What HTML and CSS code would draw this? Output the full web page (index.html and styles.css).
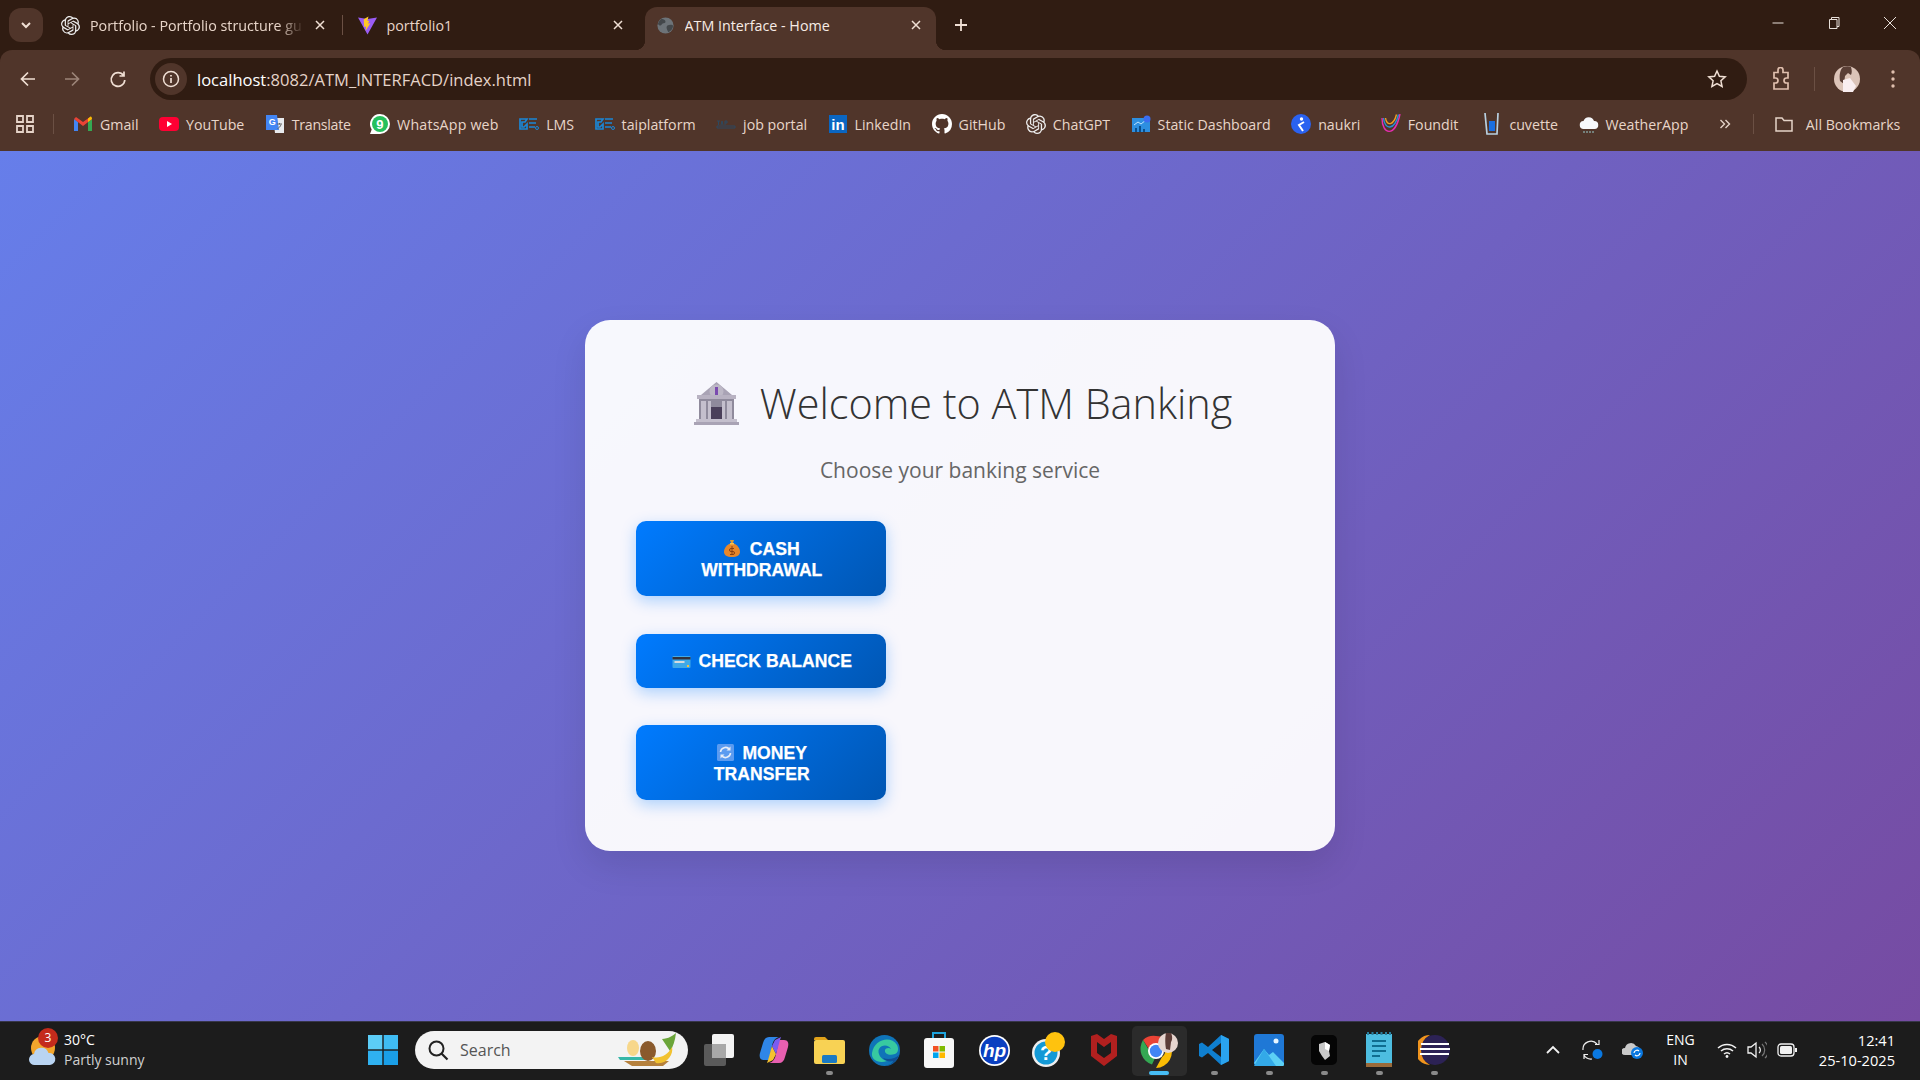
FILE: index.html
```html
<!DOCTYPE html>
<html lang="en">
<head>
<meta charset="utf-8">
<title>ATM Interface - Home</title>
<link rel="stylesheet" href="styles.css">
</head>
<body>
<header class="browser">
  <div class="tabstrip">
    <div class="tab-search"><svg width="14" height="14" viewBox="0 0 14 14"><path d="M3 5l4 4 4-4" fill="none" stroke="#f0dfd4" stroke-width="2"/></svg></div>
    <div class="tab tab-first">
      <svg class="tab-icon" viewBox="0 0 24 24" fill="#eee"><path d="M22.2819 9.8211a5.9847 5.9847 0 0 0-.5157-4.9108 6.0462 6.0462 0 0 0-6.5098-2.9A6.0651 6.0651 0 0 0 4.9807 4.1818a5.9847 5.9847 0 0 0-3.9977 2.9 6.0462 6.0462 0 0 0 .7427 7.0966 5.98 5.98 0 0 0 .511 4.9107 6.051 6.051 0 0 0 6.5146 2.9001A5.9847 5.9847 0 0 0 13.2599 24a6.0557 6.0557 0 0 0 5.7718-4.2058 5.9894 5.9894 0 0 0 3.9977-2.9001 6.0557 6.0557 0 0 0-.7475-7.0729zm-9.022 12.6081a4.4755 4.4755 0 0 1-2.8764-1.0408l.1419-.0804 4.7783-2.7582a.7948.7948 0 0 0 .3927-.6813v-6.7369l2.02 1.1686a.071.071 0 0 1 .038.052v5.5826a4.504 4.504 0 0 1-4.4945 4.4944zm-9.6607-4.1254a4.4708 4.4708 0 0 1-.5346-3.0137l.142.0852 4.783 2.7582a.7712.7712 0 0 0 .7806 0l5.8428-3.3685v2.3324a.0804.0804 0 0 1-.0332.0615L9.74 19.9502a4.4992 4.4992 0 0 1-6.1408-1.6464zM2.3408 7.8956a4.485 4.485 0 0 1 2.3655-1.9728V11.6a.7664.7664 0 0 0 .3879.6765l5.8144 3.3543-2.0201 1.1685a.0757.0757 0 0 1-.071 0l-4.8303-2.7865A4.504 4.504 0 0 1 2.3408 7.872zm16.5963 3.8558L13.1038 8.364 15.1192 7.2a.0757.0757 0 0 1 .071 0l4.8303 2.7913a4.4944 4.4944 0 0 1-.6765 8.1042v-5.6772a.79.79 0 0 0-.407-.667zm2.0107-3.0231l-.142-.0852-4.7735-2.7818a.7759.7759 0 0 0-.7854 0L9.409 9.2297V6.8974a.0662.0662 0 0 1 .0284-.0615l4.8303-2.7866a4.4992 4.4992 0 0 1 6.6802 4.66zM8.3065 12.863l-2.02-1.1638a.0804.0804 0 0 1-.038-.0567V6.0742a4.4992 4.4992 0 0 1 7.3757-3.4537l-.142.0805L8.704 5.459a.7948.7948 0 0 0-.3927.6813zm1.0976-2.3654l2.602-1.4998 2.6069 1.4998v2.9994l-2.5974 1.4997-2.6067-1.4997Z"/></svg>
      <span class="tab-title fade">Portfolio - Portfolio structure gu</span>
      <svg class="tab-close" viewBox="0 0 12 12"><path d="M2 2l8 8M10 2l-8 8"/></svg>
    </div>
    <i class="tab-sep"></i>
    <div class="tab tab-second">
      <svg class="tab-icon" viewBox="0 0 20 20"><path d="M0 1.500l10 1.600L20 1.500 10 19.500z" fill="#9a5cf5"/><path d="M11 .5L6 3.500l.5 8 2-.5-.5 4.500 5-8-2.500.5 1.500-3-2 .3z" fill="#ffc926"/></svg>
      <span class="tab-title">portfolio1</span>
      <svg class="tab-close" viewBox="0 0 12 12"><path d="M2 2l8 8M10 2l-8 8"/></svg>
    </div>
    <div class="tab tab-active">
      <svg class="tab-icon" viewBox="0 0 20 20"><circle cx="10" cy="10" r="8.500" fill="#6d7378"/><path d="M6 3c2 1 4 1 4 3S7 7 6 9s-3 1-4-.5C3 6 4 4 6 3zM12 10c2-1 5-1 6 0 0 3-2 6-5 7-1-2-3-5-1-7z" fill="#43474a"/></svg>
      <span class="tab-title">ATM Interface - Home</span>
      <svg class="tab-close" viewBox="0 0 12 12"><path d="M2 2l8 8M10 2l-8 8"/></svg>
    </div>
    <svg class="tab-new" viewBox="0 0 14 14"><path d="M7 1v12M1 7h12"/></svg>
    <div class="window-controls">
      <svg viewBox="0 0 14 14"><path d="M1.500 7h11"/></svg>
      <svg viewBox="0 0 14 14"><path d="M2.500 3.500h7.500v9H2.500zM4.500 3.500V1.500h7.500v9h-2"/></svg>
      <svg viewBox="0 0 14 14"><path d="M1 1l12 12M13 1L1 13"/></svg>
    </div>
  </div>
  <div class="toolbar">
    <svg class="tool tool-back" viewBox="0 0 20 20"><path d="M17 10H4M10 3.500L3.500 10l6.500 6.500"/></svg>
    <svg class="tool tool-forward" viewBox="0 0 20 20"><path d="M3 10h13M10 3.500l6.500 6.500-6.500 6.500"/></svg>
    <svg class="tool tool-reload" viewBox="0 0 20 20"><path d="M15.500 6.500A6.800 6.800 0 1 0 16.800 11M16 2.500v4.500h-4.500"/></svg>
    <div class="omnibox">
      <span class="site-info"><svg viewBox="0 0 20 20" width="20" height="20"><circle cx="10" cy="10" r="7.500" fill="none" stroke="#f0dfd4" stroke-width="1.500"/><path d="M10 9v5M10 6v1.500" stroke="#f0dfd4" stroke-width="1.700"/></svg></span>
      <span class="url"><b>localhost</b>:8082/ATM_INTERFACD/index.html</span>
      <svg class="star" viewBox="0 0 20 20"><path d="M10 2l2.400 5.300 5.800.6-4.300 3.900 1.200 5.700L10 14.600l-5.100 2.900 1.200-5.700L1.800 7.900l5.800-.6z"/></svg>
    </div>
    <svg class="tool tool-ext" viewBox="0 0 20 24"><path d="M3 5.500h4V3a2.500 2.500 0 0 1 5 0v2.500h5V11h-1.500a2.500 2.500 0 0 0 0 5H17v6H3v-6h1.500a2.500 2.500 0 0 0 0-5H3z"/></svg>
    <i class="toolbar-sep"></i>
    <svg class="avatar" viewBox="0 0 26 26"><circle cx="13" cy="13" r="13" fill="#dcc4b8"/><path d="M9 1c3-1 6-1 8 0 1 3 1 6 0 8l-3-2-3 3-1 8-4-3c-1-6 0-11 3-14z" fill="#5a3f36"/><path d="M9 14l7-2 6 8-3 6H9z" fill="#f9eef0"/></svg>
    <svg class="tool-menu" viewBox="0 0 4 18"><circle cx="2" cy="2" r="1.700"/><circle cx="2" cy="9" r="1.700"/><circle cx="2" cy="16" r="1.700"/></svg>
  </div>
  <nav class="bookmarks">
    <svg class="apps" viewBox="0 0 18 18"><path d="M1 1h6v6H1zM11 1h6v6h-6zM1 11h6v6H1zM11 11h6v6h-6z"/></svg>
    <i class="book-sep"></i>
    <a class="bm bm-gmail"><svg viewBox="0 0 20 20"><path d="M1 5v12h4V8z" fill="#4285f4"/><path d="M15 8v9h4V5z" fill="#34a853"/><path d="M1 5l9 7 9-7-2-2-7 5-7-5z" fill="#ea4335"/><path d="M15 8l4-3c0-2-1-3-2-2l-2 1.500z" fill="#fbbc04"/></svg>Gmail</a>
    <a class="bm bm-yt"><svg viewBox="0 0 20 20"><rect y="3" width="20" height="14" rx="4" fill="#ff0033"/><path d="M8 7l5 3-5 3z" fill="#fff"/></svg>YouTube</a>
    <a class="bm bm-tr"><svg viewBox="0 0 20 20"><path d="M8 4h11v15H10z" fill="#e8eaed"/><path d="M1 1h11l2 15H1z" fill="#4285f4"/><text x="7" y="11" class="svg-g">G</text><path d="M12 10h5M14.500 9v1.500M16 10.500c-.500 2-2 3.500-3.500 4" fill="none" stroke="#666" stroke-width="1"/></svg>Translate</a>
    <a class="bm bm-wa"><svg viewBox="0 0 20 20"><path d="M10 0a10 10 0 0 1 0 20H0l1.700-4.500A10 10 0 0 1 10 0z" fill="#fff"/><circle cx="10" cy="10" r="8" fill="#25c05c"/><text x="10" y="14.500" class="svg-nine">9</text></svg>WhatsApp web</a>
    <a class="bm bm-lms"><svg viewBox="0 0 20 14" class="logo-short"><path d="M1 2h7l-2 3H3v5h2l3-3v5H1zM10 2h8M10 6h7M10 10h6" fill="none" stroke="#1a86d6" stroke-width="1.700"/><circle cx="18" cy="11" r="1.500" fill="none" stroke="#1a86d6"/></svg>LMS</a>
    <a class="bm bm-tai"><svg viewBox="0 0 20 14" class="logo-short"><path d="M1 2h7l-2 3H3v5h2l3-3v5H1zM10 2h8M10 6h7M10 10h6" fill="none" stroke="#1a86d6" stroke-width="1.700"/><circle cx="18" cy="11" r="1.500" fill="none" stroke="#1a86d6"/></svg>taiplatform</a>
    <a class="bm bm-job"><svg viewBox="0 0 20 14" class="logo-short"><path d="M1 4h3M2.500 4v4M5 8l1-4 1 4M9 4h2v2H9zM9 6v2M1 9h18v2H1z" fill="none" stroke="#2c4960" stroke-width="1"/></svg>job portal</a>
    <a class="bm bm-li"><svg viewBox="0 0 20 20"><rect x="1" y="1" width="18" height="18" fill="#0a66c2"/><text x="10" y="16" class="svg-in">in</text></svg>LinkedIn</a>
    <a class="bm bm-gh"><svg viewBox="0 0 16 16"><path fill="#fff" d="M8 0C3.580 0 0 3.580 0 8c0 3.540 2.290 6.530 5.470 7.590.4.070.55-.17.55-.38 0-.19-.01-.82-.01-1.490-2.010.37-2.530-.49-2.690-.94-.09-.23-.48-.94-.82-1.130-.28-.15-.68-.52-.01-.53.63-.01 1.080.58 1.230.82.72 1.210 1.870.87 2.330.66.07-.52.28-.87.51-1.070-1.780-.2-3.640-.89-3.640-3.950 0-.87.31-1.590.82-2.150-.08-.2-.36-1.020.08-2.120 0 0 .67-.21 2.200.82.64-.18 1.320-.27 2-.27.68 0 1.360.09 2 .27 1.530-1.040 2.200-.82 2.200-.82.44 1.100.16 1.920.08 2.120.51.56.82 1.270.82 2.150 0 3.070-1.870 3.750-3.650 3.950.29.25.54.73.54 1.480 0 1.070-.01 1.930-.01 2.200 0 .21.15.46.55.38A8.013 8.013 0 0 0 16 8c0-4.420-3.580-8-8-8z"/></svg>GitHub</a>
    <a class="bm bm-gpt"><svg viewBox="0 0 24 24" fill="#eee"><path d="M22.2819 9.8211a5.9847 5.9847 0 0 0-.5157-4.9108 6.0462 6.0462 0 0 0-6.5098-2.9A6.0651 6.0651 0 0 0 4.9807 4.1818a5.9847 5.9847 0 0 0-3.9977 2.9 6.0462 6.0462 0 0 0 .7427 7.0966 5.98 5.98 0 0 0 .511 4.9107 6.051 6.051 0 0 0 6.5146 2.9001A5.9847 5.9847 0 0 0 13.2599 24a6.0557 6.0557 0 0 0 5.7718-4.2058 5.9894 5.9894 0 0 0 3.9977-2.9001 6.0557 6.0557 0 0 0-.7475-7.0729zm-9.022 12.6081a4.4755 4.4755 0 0 1-2.8764-1.0408l.1419-.0804 4.7783-2.7582a.7948.7948 0 0 0 .3927-.6813v-6.7369l2.02 1.1686a.071.071 0 0 1 .038.052v5.5826a4.504 4.504 0 0 1-4.4945 4.4944zm-9.6607-4.1254a4.4708 4.4708 0 0 1-.5346-3.0137l.142.0852 4.783 2.7582a.7712.7712 0 0 0 .7806 0l5.8428-3.3685v2.3324a.0804.0804 0 0 1-.0332.0615L9.74 19.9502a4.4992 4.4992 0 0 1-6.1408-1.6464zM2.3408 7.8956a4.485 4.485 0 0 1 2.3655-1.9728V11.6a.7664.7664 0 0 0 .3879.6765l5.8144 3.3543-2.0201 1.1685a.0757.0757 0 0 1-.071 0l-4.8303-2.7865A4.504 4.504 0 0 1 2.3408 7.872zm16.5963 3.8558L13.1038 8.364 15.1192 7.2a.0757.0757 0 0 1 .071 0l4.8303 2.7913a4.4944 4.4944 0 0 1-.6765 8.1042v-5.6772a.79.79 0 0 0-.407-.667zm2.0107-3.0231l-.142-.0852-4.7735-2.7818a.7759.7759 0 0 0-.7854 0L9.409 9.2297V6.8974a.0662.0662 0 0 1 .0284-.0615l4.8303-2.7866a4.4992 4.4992 0 0 1 6.6802 4.66zM8.3065 12.863l-2.02-1.1638a.0804.0804 0 0 1-.038-.0567V6.0742a4.4992 4.4992 0 0 1 7.3757-3.4537l-.142.0805L8.704 5.459a.7948.7948 0 0 0-.3927.6813zm1.0976-2.3654l2.602-1.4998 2.6069 1.4998v2.9994l-2.5974 1.4997-2.6067-1.4997Z"/></svg>ChatGPT</a>
    <a class="bm bm-dash"><svg viewBox="0 0 20 20"><rect x="1" y="4" width="18" height="14" fill="#2d8fe0"/><path d="M3 11l4-3 3 2 5-4" fill="none" stroke="#bfe3ff"/><path d="M5 18v-4M9 18v-6M13 18v-3" stroke="#0b4e8a" stroke-width="2"/><circle cx="16" cy="5" r="3.500" fill="#3a6df0"/></svg>Static Dashboard</a>
    <a class="bm bm-nk"><svg viewBox="0 0 20 20"><circle cx="10" cy="10" r="10" fill="#2a62f0"/><circle cx="10.500" cy="5" r="1.700" fill="#fff"/><path d="M13 8L8 11l4 6" fill="none" stroke="#fff" stroke-width="2"/></svg>naukri</a>
    <a class="bm bm-fd"><svg viewBox="0 0 20 20" fill="none" stroke-width="1.400"><path d="M1 4c0 17 13 20 18-4" stroke="#e62db0"/><path d="M2.500 4c1 12 11 13 15-3.500" stroke="#2b8fd6"/><path d="M4.500 4c1 8 8 8 11-3.500" stroke="#f0a020"/></svg>Foundit</a>
    <a class="bm bm-cv"><svg viewBox="0 0 20 24"><path d="M3 1l2 21h10l1-21" fill="none" stroke="#b8d0e0" stroke-width="1.700"/><rect x="7" y="9" width="6" height="10" fill="#1a6fe0"/></svg>cuvette</a>
    <a class="bm bm-wx"><svg viewBox="0 0 20 20"><path d="M5 15a4 4 0 0 1-.5-8 5.500 5.500 0 0 1 10.500 0 4 4 0 0 1 .5 8z" fill="#f6f8fb"/><path d="M5 17v2M8 17v2M11 17v2M14 17v2" stroke="#9cc" stroke-width="1"/></svg>WeatherApp</a>
    <svg class="more" viewBox="0 0 12 12"><path d="M1.500 2l4 4-4 4M6.500 2l4 4-4 4"/></svg>
    <i class="book-sep book-sep-right"></i>
    <a class="bm bm-all"><svg class="folder" viewBox="0 0 20 20"><path d="M2 4h6l2 2.500h8V17H2z"/></svg>All Bookmarks</a>
  </nav>
</header>

<main class="page">
  <section class="card">
    <h1 class="title">
      <svg class="bank" viewBox="0 0 45 43">
        <path d="M22.500 0L38 13H7z" fill="#a9a3b5"/>
        <circle cx="22.500" cy="9.500" r="7" fill="#bdb8c6"/>
        <path d="M22.500 5v9" stroke="#7b4bb0" stroke-width="3"/>
        <rect x="3" y="13" width="39" height="4" fill="#b8b2c2"/>
        <rect x="5" y="17" width="35" height="20" fill="#8f8a9c"/>
        <path d="M7 19h5v18H7zM33 19h5v18h-5zM14 19h3v18h-3zM28 19h3v18h-3z" fill="#c4bfcd"/>
        <rect x="17" y="25" width="11" height="12" fill="#4a3f5a"/>
        <rect x="2" y="37" width="41" height="3" fill="#c4bfcd"/>
        <rect y="40" width="45" height="3" fill="#a9a3b5"/>
      </svg>
      <span>Welcome to ATM Banking</span>
    </h1>
    <p class="subtitle">Choose your banking service</p>
    <div class="actions">
      <a class="btn"><svg class="emoji" viewBox="0 0 16 18"><path d="M6 1h4L9 4H7z" fill="#d99a3a"/><path d="M8 4c5 1 8 5 8 9 0 3-3 5-8 5s-8-2-8-5c0-4 3-8 8-9z" fill="#e8872a"/><path d="M6 4h4v1.500H6z" fill="#f6c453"/><path d="M8 7v9" stroke="#8a3f10" stroke-width="1"/><path d="M10 9.500H7a1.300 1.300 0 0 0 0 3h2a1.300 1.300 0 0 1 0 3H6" fill="none" stroke="#8a3f10" stroke-width="1"/></svg> CASH<br>WITHDRAWAL</a>
      <a class="btn"><svg class="emoji emoji-wide" viewBox="0 0 18 12"><rect width="18" height="12" rx="1" fill="#3fa9e8"/><rect y="1" width="18" height="2.500" fill="#33313a"/><rect x="2" y="5" width="10" height="2" fill="#d5dbe0"/><rect x="14.500" y="9" width="2" height="2" fill="#f5c542"/></svg> CHECK BALANCE</a>
      <a class="btn"><svg class="emoji emoji-square" viewBox="0 0 17 17"><rect width="17" height="17" rx="1.500" fill="#5b9bf0"/><path d="M3.500 8a5 5 0 0 1 9-2.500M13.500 9a5 5 0 0 1-9 2.500" fill="none" stroke="#e8eef8" stroke-width="1.600"/><path d="M13.500 2.500v4h-4M3.500 14.500v-4h4" fill="#e8eef8"/></svg> MONEY<br>TRANSFER</a>
    </div>
  </section>
</main>

<footer class="taskbar">
  <div class="weather">
    <span class="weather-icon">
      <svg viewBox="0 0 28 30" width="28" height="30"><circle cx="15" cy="12" r="12" fill="#f2a52c"/><path d="M7 29a5.500 5.500 0 0 1-1-11 7.500 7.500 0 0 1 14.500-1 6 6 0 0 1 1.500 12z" fill="#b9d4f2"/></svg>
      <b class="badge">3</b>
    </span>
    <div class="weather-text"><span>30°C</span><span class="dim">Partly sunny</span></div>
  </div>
  <div class="cell"><svg width="30" height="30" viewBox="0 0 30 30"><path d="M0 0h14.300v14.300H0z" fill="#5ccdf7"/><path d="M15.700 0H30v14.300H15.700z" fill="#3fbcf3"/><path d="M0 15.700h14.300V30H0z" fill="#2fb1f0"/><path d="M15.700 15.700H30V30H15.700z" fill="#1a9fe8"/></svg></div>
  <div class="search">
    <svg width="22" height="22" viewBox="0 0 22 22"><circle cx="9.500" cy="9.500" r="7" fill="none" stroke="#222" stroke-width="2"/><path d="M14.500 14.500l6 6" stroke="#222" stroke-width="2.200"/></svg>
    <span>Search</span>
    <svg class="search-art" width="68" height="34" viewBox="0 0 68 34">
      <path d="M2 24h26l3 3H4z" fill="#36b7a8"/><ellipse cx="17" cy="15" rx="6" ry="8" fill="#f7d78a"/><path d="M8 28h45l-6 5H16z" fill="#b5803c"/>
      <ellipse cx="32" cy="18" rx="8" ry="10" fill="#8a5a2c"/><path d="M46 6c6 0 12-4 14-6-1 8-3 14-6 18z" fill="#6ba53a"/><path d="M36 24c8 2 16-2 20-10 2 8-6 18-16 16z" fill="#f2c230"/>
    </svg>
  </div>
  <div class="cell cell-first"><svg width="32" height="34" viewBox="0 0 32 34"><rect x="1" y="11" width="22" height="22" rx="2" fill="#5a5a5a"/><rect x="9" y="1" width="22" height="24" rx="2" fill="#f3f3f3"/><rect x="9" y="11" width="14" height="14" fill="#a8a8a8"/></svg></div>
  <div class="cell"><svg width="30" height="30" viewBox="0 0 30 30"><path d="M10 2h10c-4 1-6 4-7 9l-3 14H5C1 25 0 22 1 18L4 8c1-4 3-6 6-6z" fill="#2f86e8"/><path d="M20 28H10c4-1 6-4 7-9l3-14h5c4 0 5 3 4 7l-3 10c-1 4-3 6-6 6z" fill="#e85fb0"/><path d="M13 11l4 8-3 6-6 3c2-5 3-11 5-17z" fill="#f5c22e"/><path d="M17 19l-4-8 3-6 6-3c-2 5-3 11-5 17z" fill="#7b5cf0"/></svg></div>
  <div class="cell running"><svg width="31" height="29" viewBox="0 0 31 29"><path d="M0 3a2 2 0 0 1 2-2h9l3 3h-14z" fill="#e0a21a"/><rect y="4" width="31" height="24" rx="2" fill="#f8d254"/><rect x="8" y="19" width="15" height="8" rx="1.500" fill="#1a7ac4"/></svg></div>
  <div class="cell"><svg width="31" height="31" viewBox="0 0 31 31"><circle cx="15.500" cy="15.500" r="15.500" fill="#0f74b8"/><path d="M3 18C5 4 22 0 28 10c2 4 1 8-2 9-5 2-11 0-10-4 .500-2 4-3 6-1-2-4-9-5-12 0-2 4 2 11 8 12-8 3-16-1-15-8z" fill="#37c9a0"/><path d="M30 20c-2 7-9 11-14 11 4-1 8-3 8-5-3 1-8 0-10-3 5 2 12 1 16-3z" fill="#0f4f94"/></svg></div>
  <div class="cell"><svg width="30" height="38" viewBox="0 0 30 38"><path d="M9 9V2h12v7" fill="none" stroke="#1ea3dc" stroke-width="2"/><rect y="7" width="30" height="30" rx="3" fill="#f7f7f7"/><rect x="9" y="15" width="5.500" height="5.500" fill="#f25022"/><rect x="15.500" y="15" width="5.500" height="5.500" fill="#7fba00"/><rect x="9" y="21.500" width="5.500" height="5.500" fill="#00a4ef"/><rect x="15.500" y="21.500" width="5.500" height="5.500" fill="#ffb900"/></svg></div>
  <div class="cell"><svg width="31" height="31" viewBox="0 0 31 31"><circle cx="15.500" cy="15.500" r="15.500" fill="#fff"/><circle cx="15.500" cy="15.500" r="13.800" fill="#0a3fc0"/><text x="15.500" y="22" class="svg-hp">hp</text></svg></div>
  <div class="cell cell-help"><svg width="34" height="36" viewBox="0 0 34 36"><circle cx="14" cy="21" r="14" fill="#eee"/><circle cx="14" cy="21" r="11.500" fill="#1399d6"/><text x="14" y="28" class="svg-help">?</text><circle cx="23" cy="10" r="10" fill="#ffc20e"/></svg></div>
  <div class="cell"><svg width="26" height="32" viewBox="0 0 26 32"><path d="M0 2l6-2 7 5 7-5 6 2v20l-13 10L0 22z" fill="#b1201f"/><path d="M6 8l7 5 7-5v11l-7 5-7-5z" fill="#1c1c1c"/></svg></div>
  <div class="cell cell-active">
    <svg width="38" height="38" viewBox="0 0 38 38">
      <path d="M16 4a16 16 0 0 1 14 8H16a8 8 0 0 0-7.400 4.500L3 8a16 16 0 0 1 13-4z" fill="#ea4335"/>
      <path d="M3 8l7 12a7 7 0 0 0 6 4l-4 8.500A16.500 16.500 0 0 1 3 8z" fill="#34a853"/>
      <path d="M30 12a16.300 16.300 0 0 1-14 24l6-11a8 8 0 0 0 0-13z" fill="#fbbc04"/>
      <circle cx="16" cy="19" r="8" fill="#fff"/><circle cx="16" cy="19" r="6.200" fill="#4285f4"/>
      <circle cx="28" cy="11" r="10" fill="#e6d5cf"/><path d="M26 1h5c2 4 1 8 0 9l-1 8-4-1c-1-5-1-12 0-16z" fill="#5b3b36"/>
    </svg>
    <i class="active-bar"></i>
  </div>
  <div class="cell running"><svg width="30" height="30" viewBox="0 0 30 30"><path d="M22 0l8 4v22l-8 4-13-12-6 4.500L0 21v-12l3-1.500 6 4.500z" fill="#0f7fcf"/><path d="M22 0l8 4v22l-8 4z" fill="#2aa3ee"/><path d="M22 8v14l-9-7z" fill="#1c1c1c"/></svg></div>
  <div class="cell running"><svg width="30" height="32" viewBox="0 0 30 32"><rect width="30" height="32" rx="3" fill="#1f78d6"/><path d="M0 29l10-14 5 6 4-3 11 11v1a3 3 0 0 1-3 3H3z" fill="#5cd0f5"/><path d="M10 15l12 17H0z" fill="#33a9e8"/><circle cx="22" cy="7" r="2.500" fill="#e8f6ff"/></svg></div>
  <div class="cell running"><svg width="26" height="30" viewBox="0 0 26 30"><rect width="26" height="30" rx="5" fill="#050505"/><path d="M8 9l6-2 5 3-1 6 1 5-5 4-3-4-3-5z" fill="#c8c8c8"/><path d="M14 7l5 3-1 6-4-2z" fill="#fff"/></svg></div>
  <div class="cell running"><svg width="26" height="36" viewBox="0 0 26 36"><rect y="2" width="26" height="29" fill="#4dbde0"/><path d="M1 0h2v3H1zM5.500 0h2v3h-2zM10 0h2v3h-2zM14.500 0h2v3h-2zM19 0h2v3h-2zM23 0h2v3h-2z" fill="#2a7f9e"/><path d="M6 9h14M6 14h14M6 19h14M6 24h8" stroke="#0f6d90" stroke-width="2"/><rect y="31" width="26" height="4" fill="#9a6a3a"/></svg></div>
  <div class="cell running"><svg width="32" height="32" viewBox="0 0 32 32"><circle cx="17" cy="16" r="15" fill="#2c2255"/><path d="M12 1A15 15 0 0 0 12 31 17 17 0 0 1 12 1z" fill="#f0941e"/><path d="M3 10h28M2 15h30M2 20h29" stroke="#fff" stroke-width="2"/></svg></div>
  <div class="tray">
    <svg class="tray-chevron" width="16" height="10" viewBox="0 0 16 10"><path d="M2 8l6-6 6 6" fill="none" stroke="#f2f2f2" stroke-width="1.800"/></svg>
    <svg class="tray-sync" width="22" height="22" viewBox="0 0 22 22"><path d="M1 11a8 8 0 0 1 14-6M17 1v4.500h-4M2 20v-4.500h4M2 16a8 8 0 0 0 8 4" fill="none" stroke="#eee" stroke-width="1.200"/><circle cx="15.500" cy="15" r="5" fill="#0a78e0"/></svg>
    <svg class="tray-cloud" width="22" height="20" viewBox="0 0 22 20"><path d="M3 15a3.500 3.500 0 0 1 0-7 6 6 0 0 1 11-2 5 5 0 0 1 2 9z" fill="#c9c9c9"/><circle cx="15" cy="13" r="6" fill="#0a78e0"/><path d="M12 13a3 3 0 0 1 5-2M18 13a3 3 0 0 1-5 2" fill="none" stroke="#fff" stroke-width="1.200"/></svg>
    <div class="lang"><span>ENG</span><span>IN</span></div>
    <svg class="tray-wifi" width="20" height="16" viewBox="0 0 20 16"><path d="M1 6a13 13 0 0 1 18 0M4 9a9 9 0 0 1 12 0M7 12a4.500 4.500 0 0 1 6 0" fill="none" stroke="#f2f2f2" stroke-width="1.500"/><circle cx="10" cy="14.500" r="1.400" fill="#f2f2f2"/></svg>
    <svg class="tray-vol" width="20" height="18" viewBox="0 0 20 18"><path d="M1 6h3l5-4v14l-5-4H1z" fill="none" stroke="#f2f2f2" stroke-width="1.300"/><path d="M12 6a4 4 0 0 1 0 6" fill="none" stroke="#f2f2f2" stroke-width="1.200"/><path d="M15 3a8 8 0 0 1 0 12M18 1a11 11 0 0 1 0 16" fill="none" stroke="#777" stroke-width="1.200"/></svg>
    <svg class="tray-bat" width="20" height="14" viewBox="0 0 20 14"><rect x="1" y="1" width="16" height="12" rx="3" fill="none" stroke="#f2f2f2" stroke-width="1.300"/><rect x="3" y="3" width="12" height="8" rx="1.500" fill="#f2f2f2"/><rect x="18" y="5" width="2" height="4" fill="#f2f2f2"/></svg>
    <div class="clock"><span>12:41</span><span>25-10-2025</span></div>
  </div>
</footer>
</body>
</html>
```

FILE: styles.css
```css
* { box-sizing: border-box; }
html, body { margin: 0; height: 100%; }
body {
  display: flex;
  flex-direction: column;
  height: 100vh;
  overflow: hidden;
  font-family: "Open Sans", "Noto Sans", sans-serif;
  background: #301c12;
}
svg { display: block; flex: none; }

/* browser chrome */
.browser { background: #301c12; color: #f0dfd4; }
.tabstrip { display: flex; align-items: flex-end; height: 50px; padding-left: 9px; }
.tab-search {
  width: 34px; height: 34px; margin-bottom: 8px; border-radius: 12px;
  background: #50352a; display: flex; align-items: center; justify-content: center;
}
.tab {
  position: relative;
  display: flex; align-items: center;
  width: 291px; height: 43px; margin-left: 6px;
  padding: 0 14px 7px 11px;
  border-radius: 12px 12px 0 0;
  font-size: 14.300px; color: #e8d5c9;
}
.tab-first { padding-left: 12px; }
.tab-second { margin-left: 3.500px; }
.tab-sep { width: 1px; height: 20px; margin: 0 0 15px 2px; background: #6b5044; }
.tab-active { background: #50352a; margin-left: 7px; color: #f7ece6; }
.tab-active::before, .tab-active::after {
  content: ""; position: absolute; bottom: 0; width: 10px; height: 10px;
}
.tab-active::before { left: -10px; background: radial-gradient(circle at 0 0, transparent 10px, #50352a 10.500px); }
.tab-active::after { right: -10px; background: radial-gradient(circle at 100% 0, transparent 10px, #50352a 10.500px); }
.tab-icon { width: 19px; height: 19px; margin-right: 10px; }
.tab-title { flex: 1; overflow: hidden; white-space: nowrap; }
.fade { -webkit-mask-image: linear-gradient(90deg, #000 88%, transparent); mask-image: linear-gradient(90deg, #000 88%, transparent); }
.tab-close { width: 12px; height: 12px; margin-left: 10px; fill: none; stroke: #f0dfd4; stroke-width: 1.500; }
.tab-new { width: 14px; height: 14px; margin: 0 0 18px 18px; fill: none; stroke: #f0dfd4; stroke-width: 1.800; }
.window-controls { margin-left: auto; margin-bottom: 20px; padding-right: 23px; display: flex; gap: 42px; }
.window-controls svg { width: 14px; height: 14px; fill: none; stroke: #e8e0da; stroke-width: 1; }

.toolbar {
  display: flex; align-items: center;
  height: 50px; padding: 8px 0 0;
  background: #50352a;
  border-radius: 12px 12px 0 0;
}
.tool { width: 20px; height: 20px; fill: none; stroke: #f0dfd4; stroke-width: 1.700; }
.tool-back { margin-left: 18px; }
.tool-forward { margin-left: 24px; stroke: #9c8478; }
.tool-reload { margin-left: 26px; margin-right: 22px; }
.omnibox {
  display: flex; align-items: center;
  width: 1597px; height: 42px; padding: 0 20px 0 5px;
  background: #301c12; border-radius: 21px;
}
.site-info {
  display: flex; align-items: center; justify-content: center;
  width: 32px; height: 32px; border-radius: 50%; background: #50352a;
}
.url { flex: 1; margin-left: 10px; font-size: 16.550px; color: #e5d3c8; }
.url b { font-weight: 400; color: #fff; }
.star { width: 20px; height: 20px; fill: none; stroke: #f0dfd4; stroke-width: 1.500; }
.tool-ext { margin-left: 24px; height: 24px; stroke: #e0bfae; }
.toolbar-sep { width: 1px; height: 24px; margin-left: 23px; background: #6b5044; }
.avatar { width: 26px; height: 26px; margin-left: 19px; }
.tool-menu { width: 4px; height: 18px; margin-left: 30.500px; fill: #e0bfae; }

.bookmarks {
  display: flex; align-items: center;
  height: 51px; padding: 0 0 3px 16px;
  background: #50352a;
}
.apps { width: 18px; height: 18px; fill: none; stroke: #e5d3c8; stroke-width: 1.800; }
.book-sep { width: 1px; height: 20px; margin: 0 19px 0 19px; background: #6b5044; }
.bm {
  display: flex; align-items: center; gap: 7px;
  margin-right: 20.500px;
  font-size: 14.200px; color: #e8d5c9; white-space: nowrap;
}
.bm svg { width: 20px; height: 20px; }
.bm .logo-short { height: 14px; }
.bm-tr { letter-spacing: -.3px; }
.bm-wa { letter-spacing: .2px; margin-left: -1px; }
.bm-cv { margin-left: 3.500px; }
.bm-cv svg { height: 24px; }
.more { width: 12px; height: 12px; margin-left: 10px; fill: none; stroke: #e5d3c8; stroke-width: 1.400; }
.book-sep-right { margin: 0 20px 0 22px; }
.bm-all { margin-right: 0; gap: 12px; }
.folder { fill: none; stroke: #e5d3c8; stroke-width: 1.500; }
.svg-g { font: 700 9px "Liberation Sans", sans-serif; fill: #fff; text-anchor: middle; }
.svg-nine { font: 700 13px "Liberation Sans", sans-serif; fill: #fff; text-anchor: middle; }
.svg-in { font: 700 15px "Liberation Sans", sans-serif; fill: #fff; text-anchor: middle; }
.svg-hp { font: italic 700 19px "Liberation Sans", sans-serif; fill: #fff; text-anchor: middle; }
.svg-help { font: 700 20px "Liberation Sans", sans-serif; fill: #fff; text-anchor: middle; }

/* page */
.page {
  flex: 1;
  display: flex; align-items: center; justify-content: center;
  padding-bottom: 1px;
  background: linear-gradient(135deg, #667eea 0%, #764ba2 100%);
}
.card {
  width: 750px; height: 531px;
  padding: 50px 51px;
  background: rgba(255, 255, 255, .95);
  border-radius: 25px;
  box-shadow: 0 15px 35px rgba(0, 0, 0, .1);
  text-align: center;
}
.title {
  display: flex; align-items: center; justify-content: center; gap: 21px;
  height: 66px; margin: 0 0 14px; padding-left: 6px;
  font-size: 41.400px; font-weight: 300; color: #333; line-height: 66px;
}
.bank { width: 45px; height: 43px; }
.subtitle { margin: 0 0 31px; height: 40px; font-size: 21px; line-height: 40px; color: #666; }
.actions { display: flex; flex-direction: column; align-items: flex-start; gap: 37.500px; }
.btn {
  display: block;
  width: 250px; padding: 17.500px 20px 15.500px 21.500px;
  background: linear-gradient(135deg, #007bff, #0056b3);
  border-radius: 10px;
  box-shadow: 0 5px 15px rgba(0, 123, 255, .3);
  font: 700 17.600px/21px "Liberation Sans", Arial, sans-serif;
  -webkit-text-stroke: .25px #fff;
  color: #fff;
}
.emoji { display: inline-block; vertical-align: -2px; width: 16px; height: 18px; margin-right: 5px; }
.emoji-wide { width: 19px; height: 12px; vertical-align: -1px; margin-right: 3px; }
.emoji-square { width: 17px; height: 17px; margin-right: 4px; }

/* taskbar */
.taskbar {
  display: flex; align-items: center;
  height: 59px; padding-bottom: 2px;
  background: #1c1c1c;
  border-top: 1px solid #37364a;
  color: #fff;
  font-size: 14px;
}
.weather { display: flex; align-items: center; width: 355px; padding-left: 28px; }
.weather-icon { position: relative; display: block; width: 28px; height: 30px; margin-top: 2px; }
.badge {
  position: absolute; left: 10px; top: -8px;
  width: 20px; height: 20px; border-radius: 50%;
  background: #c42b1c; color: #fff; font-size: 12px; font-weight: 400; line-height: 20px; text-align: center;
}
.weather-text { display: flex; flex-direction: column; margin-left: 8px; line-height: 20px; }
.dim { color: #d0d0d0; }
.cell {
  position: relative;
  display: flex; align-items: center; justify-content: center;
  width: 55px; height: 56px;
}
.cell-first { margin-left: 3.500px; }
.running::after {
  content: ""; position: absolute; left: 24px; bottom: 3px;
  width: 7px; height: 4px; border-radius: 2px; background: #8a8a8a;
}
.cell-active { background: #2b2b2b; border-radius: 5px; height: 50px; margin-top: 2px; }
.active-bar {
  position: absolute; left: 17px; bottom: 1px; width: 20px; height: 4px;
  border-radius: 2px; background: #47bdf5;
}
.search {
  display: flex; align-items: center;
  width: 273px; height: 38px; margin-left: 5px; padding: 0 4px 0 12px;
  background: #f3f3f3; border-radius: 19px;
  color: #555; font-size: 16px;
}
.search span { margin-left: 11px; }
.search-art { margin-left: auto; }
.tray { position: relative; flex: 1; display: flex; align-items: center; height: 56px; padding-left: 83px; }
.tray-sync { margin-left: 21px; }
.tray-cloud { margin-left: 18px; }
.lang { display: flex; flex-direction: column; align-items: center; width: 42px; margin-left: 16px; line-height: 20px; }
.tray-wifi { margin-left: 15px; }
.tray-vol { margin-left: 10px; }
.tray-bat { margin-left: 10px; }
.clock { display: flex; flex-direction: column; align-items: flex-end; margin-left: auto; margin-right: 25px; line-height: 20px; font-size: 14.600px; }
```
